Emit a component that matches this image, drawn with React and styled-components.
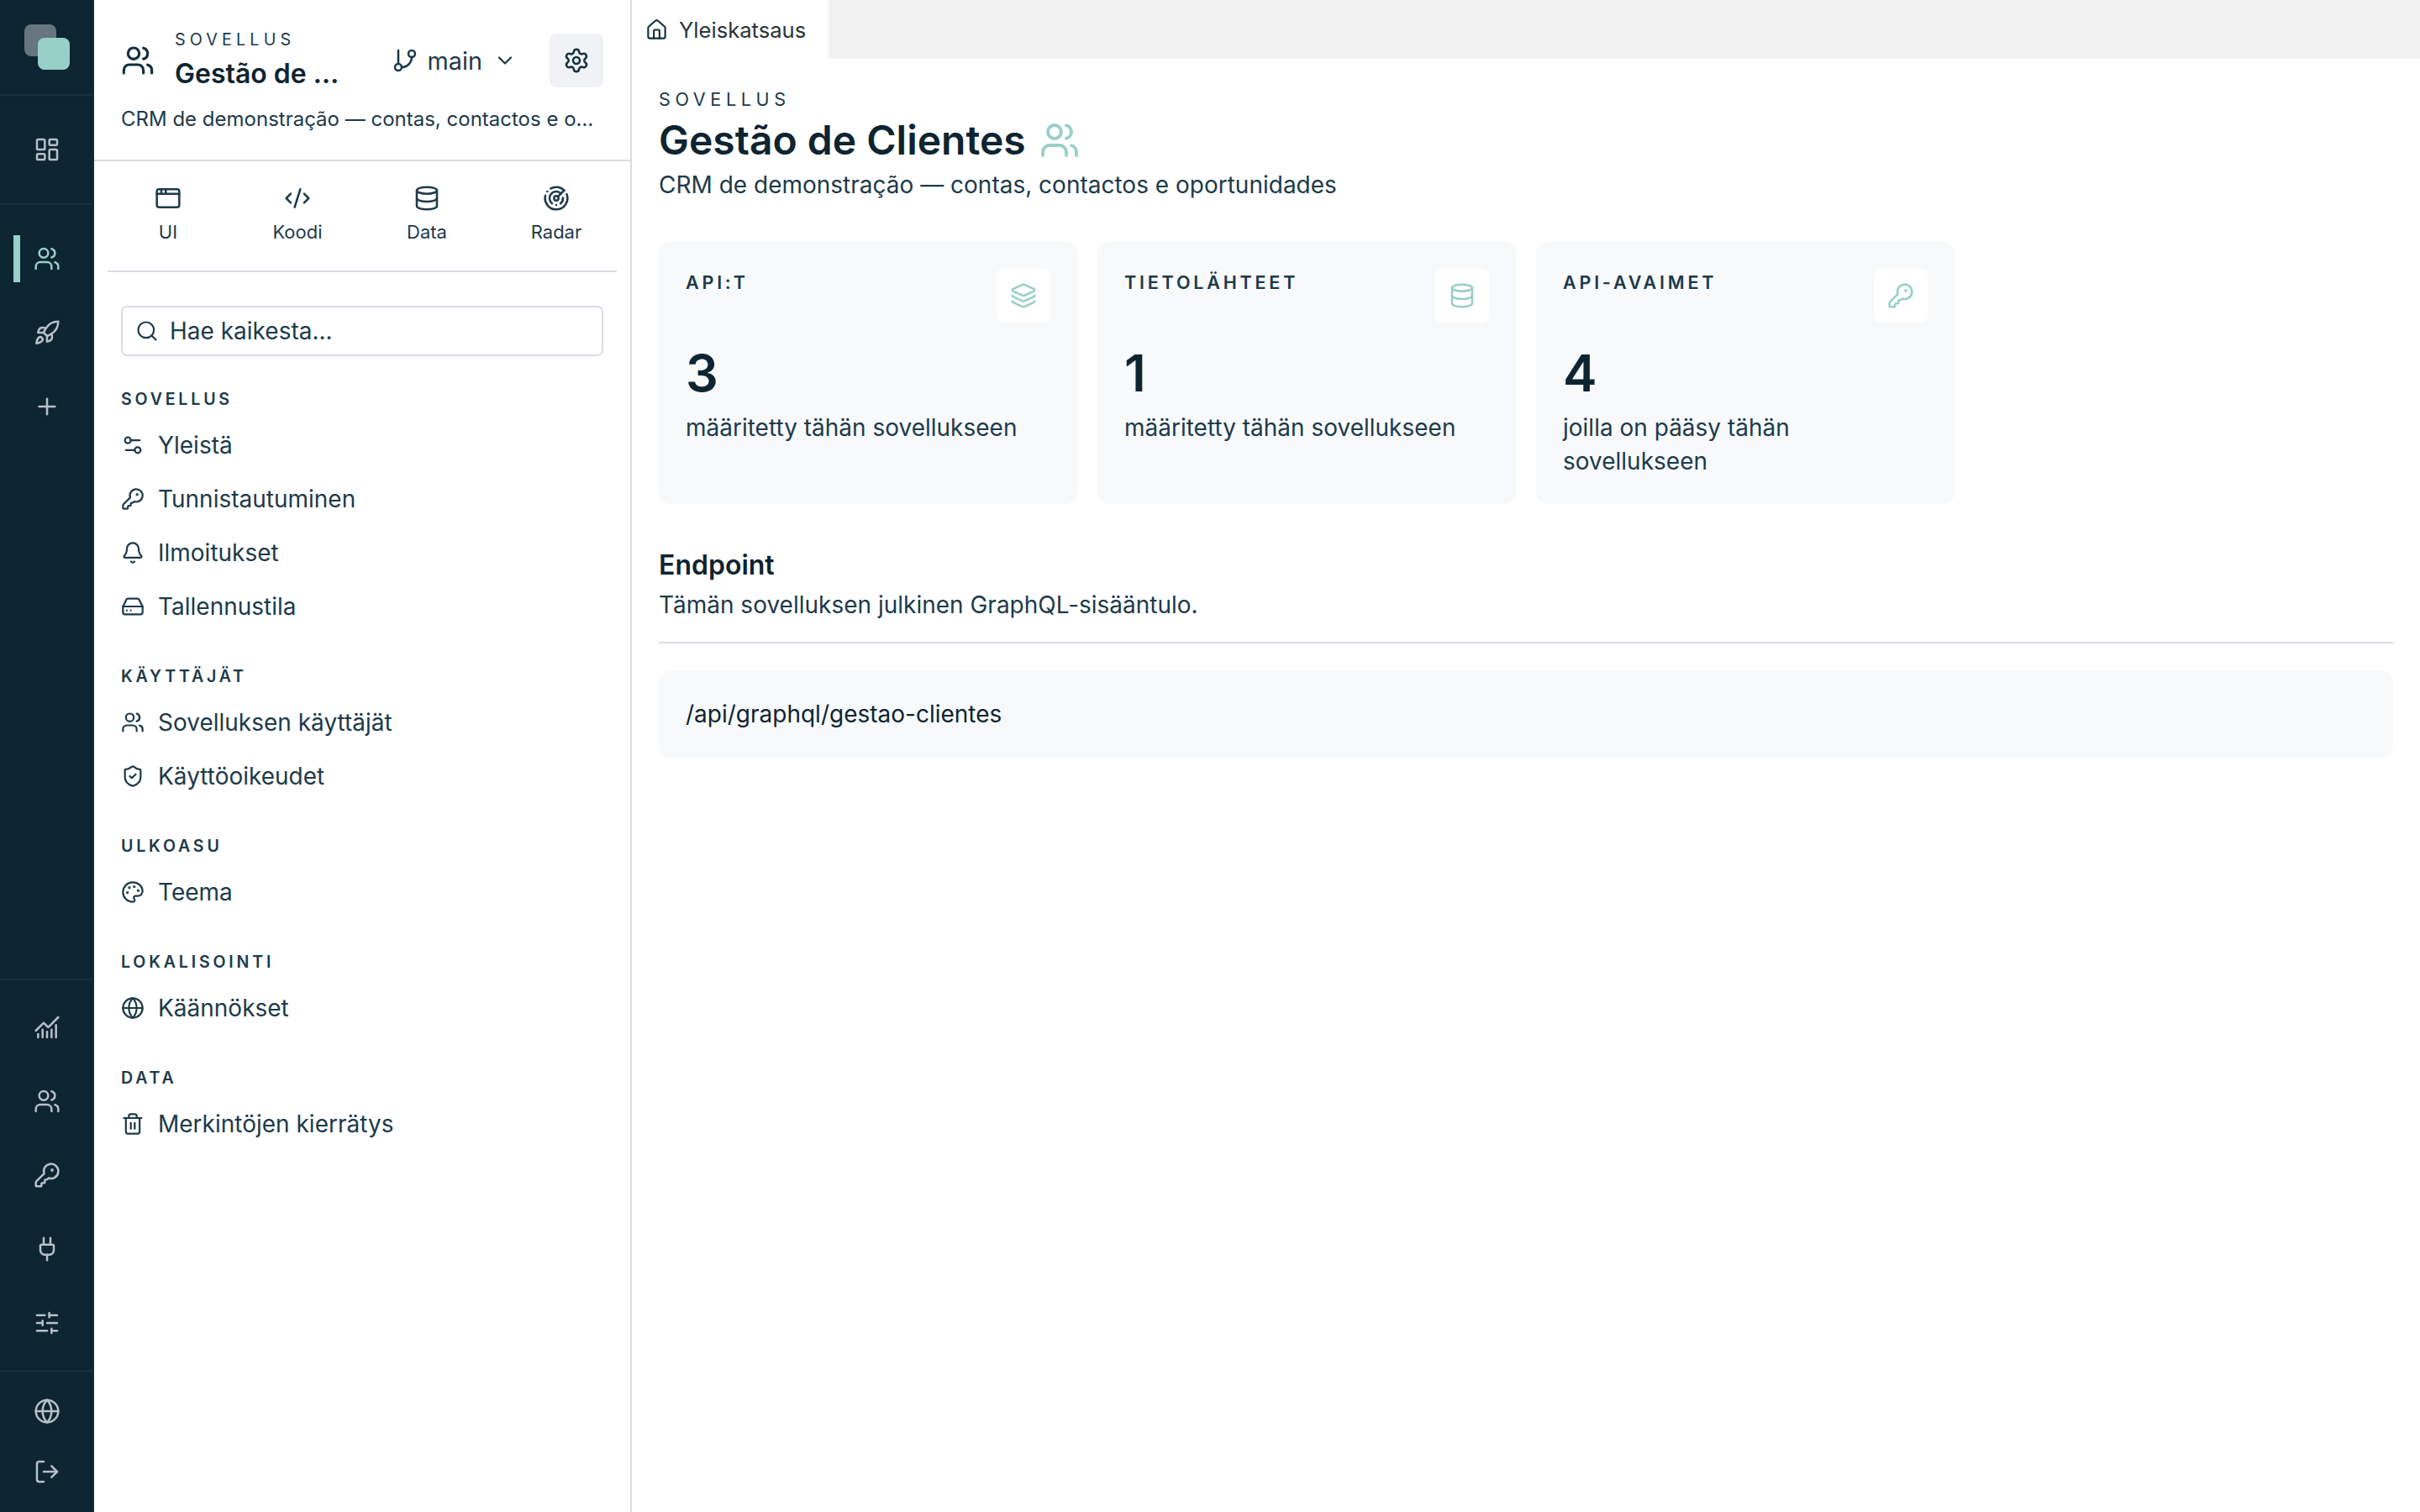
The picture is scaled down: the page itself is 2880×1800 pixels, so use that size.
import React from 'react';
import styled, { createGlobalStyle } from 'styled-components';
import {
  Users, LayoutDashboard, Rocket, Plus, ChartNoAxesCombined, KeyRound, Plug, SlidersHorizontal, Globe, LogOut,
  GitBranch, ChevronDown, Settings, AppWindow, CodeXml, Database, Radar, Search, Settings2, Bell, HardDrive,
  ShieldCheck, Palette, Trash2, House, Layers,
} from 'lucide-react';

const GlobalStyle = createGlobalStyle`
  html, body { margin: 0; padding: 0; height: 100%; background: #fff; }
  body { font-family: Inter, "Noto Sans", sans-serif; color: #1d3a4a; }
  #root { height: 100%; }
  * { box-sizing: border-box; }
`;

const Shell = styled.div`
  display: flex;
  width: 2880px;
  height: 1800px;
  overflow: hidden;
`;

const Rail = styled.nav`
  flex: 0 0 112px;
  display: flex;
  flex-direction: column;
  background: #0d2431;
  border-right: 2px solid #112b39;
  color: #b6bfc5;
`;

const RailLogoBox = styled.div`
  position: relative;
  flex: 0 0 114px;
  border-bottom: 2px solid #15303f;
`;

const LogoBack = styled.span`
  position: absolute;
  left: 29px;
  top: 29px;
  width: 38px;
  height: 38px;
  border-radius: 8px;
  background: #66757e;
`;

const LogoFront = styled.span`
  position: absolute;
  left: 45px;
  top: 45px;
  width: 38px;
  height: 38px;
  border-radius: 8px;
  background: #98cfc7;
`;

const RailSection = styled.div`
  display: flex;
  flex-direction: column;
  flex: ${p => (p.$grow ? '1' : '0 0 auto')};
  padding: ${p => p.$pad || '0'};
  border-bottom: ${p => (p.$line ? '2px solid #15303f' : 'none')};
`;

const RailItem = styled.div`
  position: relative;
  display: flex;
  align-items: center;
  justify-content: center;
  height: ${p => p.$h || 88}px;
  padding-left: 2px;
  color: ${p => (p.$active ? '#98cfc7' : '#b6bfc5')};
  ${p => p.$active && `
    &::before {
      content: '';
      position: absolute;
      left: 16px;
      top: 16px;
      width: 8px;
      height: 56px;
      background: #98cfc7;
    }
  `}
`;

const Panel = styled.aside`
  flex: 0 0 640px;
  width: 640px;
  min-width: 0;
  display: flex;
  flex-direction: column;
  border-right: 2px solid #d8dde3;
`;

const PanelHeader = styled.header`
  padding: 34px 32px 30px 32px;
  border-bottom: 2px solid #d8dde3;
`;

const HeaderRow = styled.div`
  display: flex;
  align-items: center;
  height: 76px;
`;

const AppIcon = styled.span`
  display: flex;
  flex: 0 0 40px;
  margin-right: 24px;
  color: #12303f;
`;

const TitleBlock = styled.div`
  flex: 0 0 202px;
  min-width: 0;
  align-self: flex-start;
`;

const Eyebrow = styled.div`
  font-size: 19.8px;
  line-height: 26px;
  letter-spacing: 5.1px;
  color: #1d3a4a;
`;

const PanelTitle = styled.div`
  margin-top: 8px;
  font-size: 32px;
  line-height: 40px;
  font-weight: 600;
  color: #0e2431;
  white-space: nowrap;
  overflow: hidden;
  text-overflow: ellipsis;
`;

const Branch = styled.div`
  display: flex;
  align-items: center;
  margin-left: auto;
  color: #1d3a4a;
  font-size: 28.8px;
  gap: 11px;
`;

const BranchChevron = styled.span`
  display: flex;
  margin: 0 39px 0 2px;
`;

const SettingsButton = styled.div`
  flex: 0 0 64px;
  height: 64px;
  display: flex;
  align-items: center;
  justify-content: center;
  background: #f0f2f5;
  border-radius: 8px;
  color: #12303f;
`;

const PanelSub = styled.div`
  margin-top: 14px;
  font-size: 24px;
  line-height: 36px;
  color: #1d3a4a;
  white-space: nowrap;
  overflow: hidden;
  text-overflow: ellipsis;
`;

const TabGrid = styled.div`
  display: grid;
  grid-template-columns: repeat(4, 1fr);
  column-gap: 10px;
  margin: 0 16px;
  padding: 28px 0 31px;
  border-bottom: 2px solid #d8dde3;
`;

const ToolTab = styled.div`
  display: flex;
  flex-direction: column;
  align-items: center;
  gap: 9px;
  font-size: 22px;
  line-height: 30px;
  color: #1d3a4a;
`;

const PanelBody = styled.div`
  padding: 40px 32px 0 32px;
`;

const SearchBox = styled.div`
  display: flex;
  align-items: center;
  height: 60px;
  padding: 0 15px;
  gap: 13px;
  border: 2px solid #d8dde3;
  border-radius: 7px;
  font-size: 28px;
  color: #1d3a4a;
`;

const NavGroup = styled.section`
  padding-top: 39px;
`;

const NavLabel = styled.div`
  font-size: 19.6px;
  line-height: 24px;
  font-weight: 600;
  letter-spacing: 3.8px;
  color: #1d3a4a;
  margin-bottom: 11px;
`;

const NavRow = styled.div`
  display: flex;
  align-items: center;
  height: 64px;
  gap: 16px;
  font-size: 28px;
  color: #1d3a4a;
`;

const Main = styled.main`
  flex: 1;
  min-width: 0;
  display: flex;
  flex-direction: column;
`;

const TabBar = styled.div`
  display: flex;
  flex: 0 0 70px;
  background: #f2f2f2;
`;

const PageTab = styled.div`
  display: flex;
  align-items: center;
  gap: 13px;
  width: 234px;
  padding-left: 16px;
  background: #fff;
  font-size: 25.6px;
  color: #2b3338;
`;

const PageTabIcon = styled.span`
  display: flex;
  color: #12303f;
`;

const Content = styled.div`
  padding: 33px 32px 0 32px;
`;

const PageEyebrow = styled.div`
  font-size: 21.6px;
  line-height: 30px;
  letter-spacing: 5.6px;
  color: #1d3a4a;
`;

const PageTitle = styled.h1`
  display: flex;
  align-items: center;
  gap: 16px;
  margin: 4px 0 0;
  font-size: 48px;
  line-height: 60px;
  font-weight: 600;
  color: #0e2431;
`;

const PageTitleIcon = styled.span`
  display: flex;
  color: #98cfc7;
`;

const PageDesc = styled.p`
  margin: 3px 0 0;
  font-size: 28px;
  line-height: 40px;
  color: #1d3a4a;
`;

const Cards = styled.div`
  display: grid;
  grid-template-columns: repeat(3, 1fr);
  gap: 24px;
  width: 1542px;
  margin-top: 48px;
`;

const Card = styled.article`
  height: 312px;
  padding: 32px;
  background: #f7f9fb;
  border-radius: 14px;
`;

const CardHead = styled.div`
  display: flex;
  justify-content: space-between;
  align-items: flex-start;
  height: 64px;
`;

const CardLabel = styled.div`
  font-size: 21.6px;
  line-height: 32px;
  font-weight: 600;
  letter-spacing: 3.75px;
  color: #1d3a4a;
`;

const CardIcon = styled.div`
  flex: 0 0 64px;
  height: 64px;
  display: flex;
  align-items: center;
  justify-content: center;
  background: #fff;
  border-radius: 8px;
  color: #98cfc7;
`;

const CardValue = styled.div`
  margin-top: 25px;
  font-size: 61px;
  line-height: 70px;
  font-weight: 600;
  color: #0e2431;
`;

const CardText = styled.div`
  margin-top: 10px;
  font-size: 28px;
  line-height: 40px;
  color: #1d3a4a;
`;

const SectionTitle = styled.h2`
  margin: 51px 0 0;
  font-size: 32px;
  line-height: 44px;
  font-weight: 600;
  color: #0e2431;
`;

const SectionDesc = styled.p`
  margin: 5px 0 0;
  padding-bottom: 24px;
  font-size: 28px;
  line-height: 40px;
  color: #1d3a4a;
  border-bottom: 2px solid #d8dde3;
`;

const CodeBox = styled.div`
  display: flex;
  align-items: center;
  height: 104px;
  margin-top: 32px;
  padding: 0 32px;
  background: #f7f9fb;
  border-radius: 14px;
  font-size: 28px;
  color: #0e2431;
`;

const railTop = [
  { icon: Users, active: true },
  { icon: Rocket },
  { icon: Plus },
];
const railBottom = [ChartNoAxesCombined, Users, KeyRound, Plug, SlidersHorizontal];
const railFoot = [Globe, LogOut];

const tools = [
  { icon: AppWindow, label: 'UI' },
  { icon: CodeXml, label: 'Koodi' },
  { icon: Database, label: 'Data' },
  { icon: Radar, label: 'Radar' },
];

const nav = [
  { title: 'SOVELLUS', items: [[Settings2, 'Yleistä'], [KeyRound, 'Tunnistautuminen'], [Bell, 'Ilmoitukset'], [HardDrive, 'Tallennustila']] },
  { title: 'KÄYTTÄJÄT', items: [[Users, 'Sovelluksen käyttäjät'], [ShieldCheck, 'Käyttöoikeudet']] },
  { title: 'ULKOASU', items: [[Palette, 'Teema']] },
  { title: 'LOKALISOINTI', items: [[Globe, 'Käännökset']] },
  { title: 'DATA', items: [[Trash2, 'Merkintöjen kierrätys']] },
];

const cards = [
  { label: 'API:T', icon: Layers, value: '3', text: 'määritetty tähän sovellukseen' },
  { label: 'TIETOLÄHTEET', icon: Database, value: '1', text: 'määritetty tähän sovellukseen' },
  { label: 'API-AVAIMET', icon: KeyRound, value: '4', text: 'joilla on pääsy tähän sovellukseen' },
];

const SW = 1.9;

export default function App() {
  return (
    <>
      <GlobalStyle />
      <Shell>
        <Rail>
          <RailLogoBox>
            <LogoBack />
            <LogoFront />
          </RailLogoBox>
          <RailSection $line $pad="0">
            <RailItem $h={128}><LayoutDashboard size={32} strokeWidth={SW} /></RailItem>
          </RailSection>
          <RailSection $grow $pad="20px 0 0" $line>
            {railTop.map(({ icon: I, active }, i) => (
              <RailItem key={i} $active={active}><I size={32} strokeWidth={SW} /></RailItem>
            ))}
          </RailSection>
          <RailSection $line $pad="12px 0">
            {railBottom.map((I, i) => (
              <RailItem key={i}><I size={32} strokeWidth={SW} /></RailItem>
            ))}
          </RailSection>
          <RailSection $pad="11px 0 12px">
            {railFoot.map((I, i) => (
              <RailItem key={i} $h={72}><I size={32} strokeWidth={SW} /></RailItem>
            ))}
          </RailSection>
        </Rail>

        <Panel>
          <PanelHeader>
            <HeaderRow>
              <AppIcon><Users size={40} strokeWidth={SW} /></AppIcon>
              <TitleBlock>
                <Eyebrow>SOVELLUS</Eyebrow>
                <PanelTitle>Gestão de Clientes</PanelTitle>
              </TitleBlock>
              <Branch>
                <GitBranch size={32} strokeWidth={SW} />
                main
                <BranchChevron><ChevronDown size={28} strokeWidth={SW} /></BranchChevron>
              </Branch>
              <SettingsButton><Settings size={32} strokeWidth={SW} /></SettingsButton>
            </HeaderRow>
            <PanelSub>CRM de demonstração — contas, contactos e oportunidades</PanelSub>
          </PanelHeader>

          <TabGrid>
            {tools.map(({ icon: I, label }) => (
              <ToolTab key={label}><I size={32} strokeWidth={SW} />{label}</ToolTab>
            ))}
          </TabGrid>

          <PanelBody>
            <SearchBox><Search size={28} strokeWidth={SW} />Hae kaikesta...</SearchBox>
            {nav.map(group => (
              <NavGroup key={group.title}>
                <NavLabel>{group.title}</NavLabel>
                {group.items.map(([I, label]) => (
                  <NavRow key={label}><I size={28} strokeWidth={SW} />{label}</NavRow>
                ))}
              </NavGroup>
            ))}
          </PanelBody>
        </Panel>

        <Main>
          <TabBar>
            <PageTab>
              <PageTabIcon><House size={27} strokeWidth={SW} /></PageTabIcon>
              Yleiskatsaus
            </PageTab>
          </TabBar>
          <Content>
            <PageEyebrow>SOVELLUS</PageEyebrow>
            <PageTitle>
              Gestão de Clientes
              <PageTitleIcon><Users size={48} strokeWidth={SW} /></PageTitleIcon>
            </PageTitle>
            <PageDesc>CRM de demonstração — contas, contactos e oportunidades</PageDesc>
            <Cards>
              {cards.map(({ label, icon: I, value, text }) => (
                <Card key={label}>
                  <CardHead>
                    <CardLabel>{label}</CardLabel>
                    <CardIcon><I size={32} strokeWidth={SW} /></CardIcon>
                  </CardHead>
                  <CardValue>{value}</CardValue>
                  <CardText>{text}</CardText>
                </Card>
              ))}
            </Cards>
            <SectionTitle>Endpoint</SectionTitle>
            <SectionDesc>Tämän sovelluksen julkinen GraphQL-sisääntulo.</SectionDesc>
            <CodeBox>/api/graphql/gestao-clientes</CodeBox>
          </Content>
        </Main>
      </Shell>
    </>
  );
}
